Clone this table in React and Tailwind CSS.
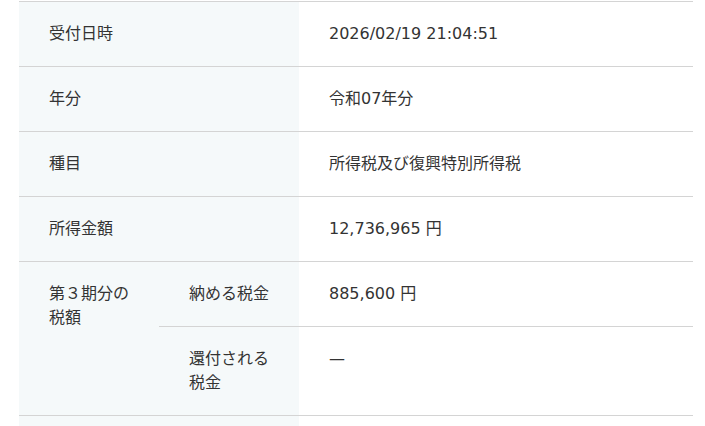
export default function App() {
  const rows = [
    { label: '受付日時', value: '2026/02/19 21:04:51' },
    { label: '年分', value: '令和07年分' },
    { label: '種目', value: '所得税及び復興特別所得税' },
    { label: '所得金額', value: '12,736,965 円' },
  ];

  const label = 'bg-[#f5f9fa] px-[30px] py-5 border-t border-[#d4d4d4]';
  const value = 'px-[30px] py-5 border-t border-[#d4d4d4]';

  return (
    <div
      className="bg-white min-h-screen pt-px pl-[19px] pr-[12px] text-[16px] leading-6 text-[#333]"
      style={{ fontFamily: '"DejaVu Sans", "Noto Sans CJK JP", sans-serif' }}
    >
      <div className="grid grid-cols-[140px_140px_1fr] border-b border-[#d4d4d4]">
        {rows.map((r) => (
          <div key={r.label} className="contents">
            <div className={`${label} col-span-2`}>{r.label}</div>
            <div className={value}>{r.value}</div>
          </div>
        ))}

        <div className={`${label} row-span-2`}>第３期分の税額</div>
        <div className={label}>納める税金</div>
        <div className={value}>885,600 円</div>
        <div className={label}>還付される税金</div>
        <div className={value}>—</div>
      </div>
      {/* next row, cut off by the window */}
      <div className="grid grid-cols-[280px_1fr] h-16">
        <div className="bg-[#f5f9fa]" />
        <div />
      </div>
    </div>
  );
}
